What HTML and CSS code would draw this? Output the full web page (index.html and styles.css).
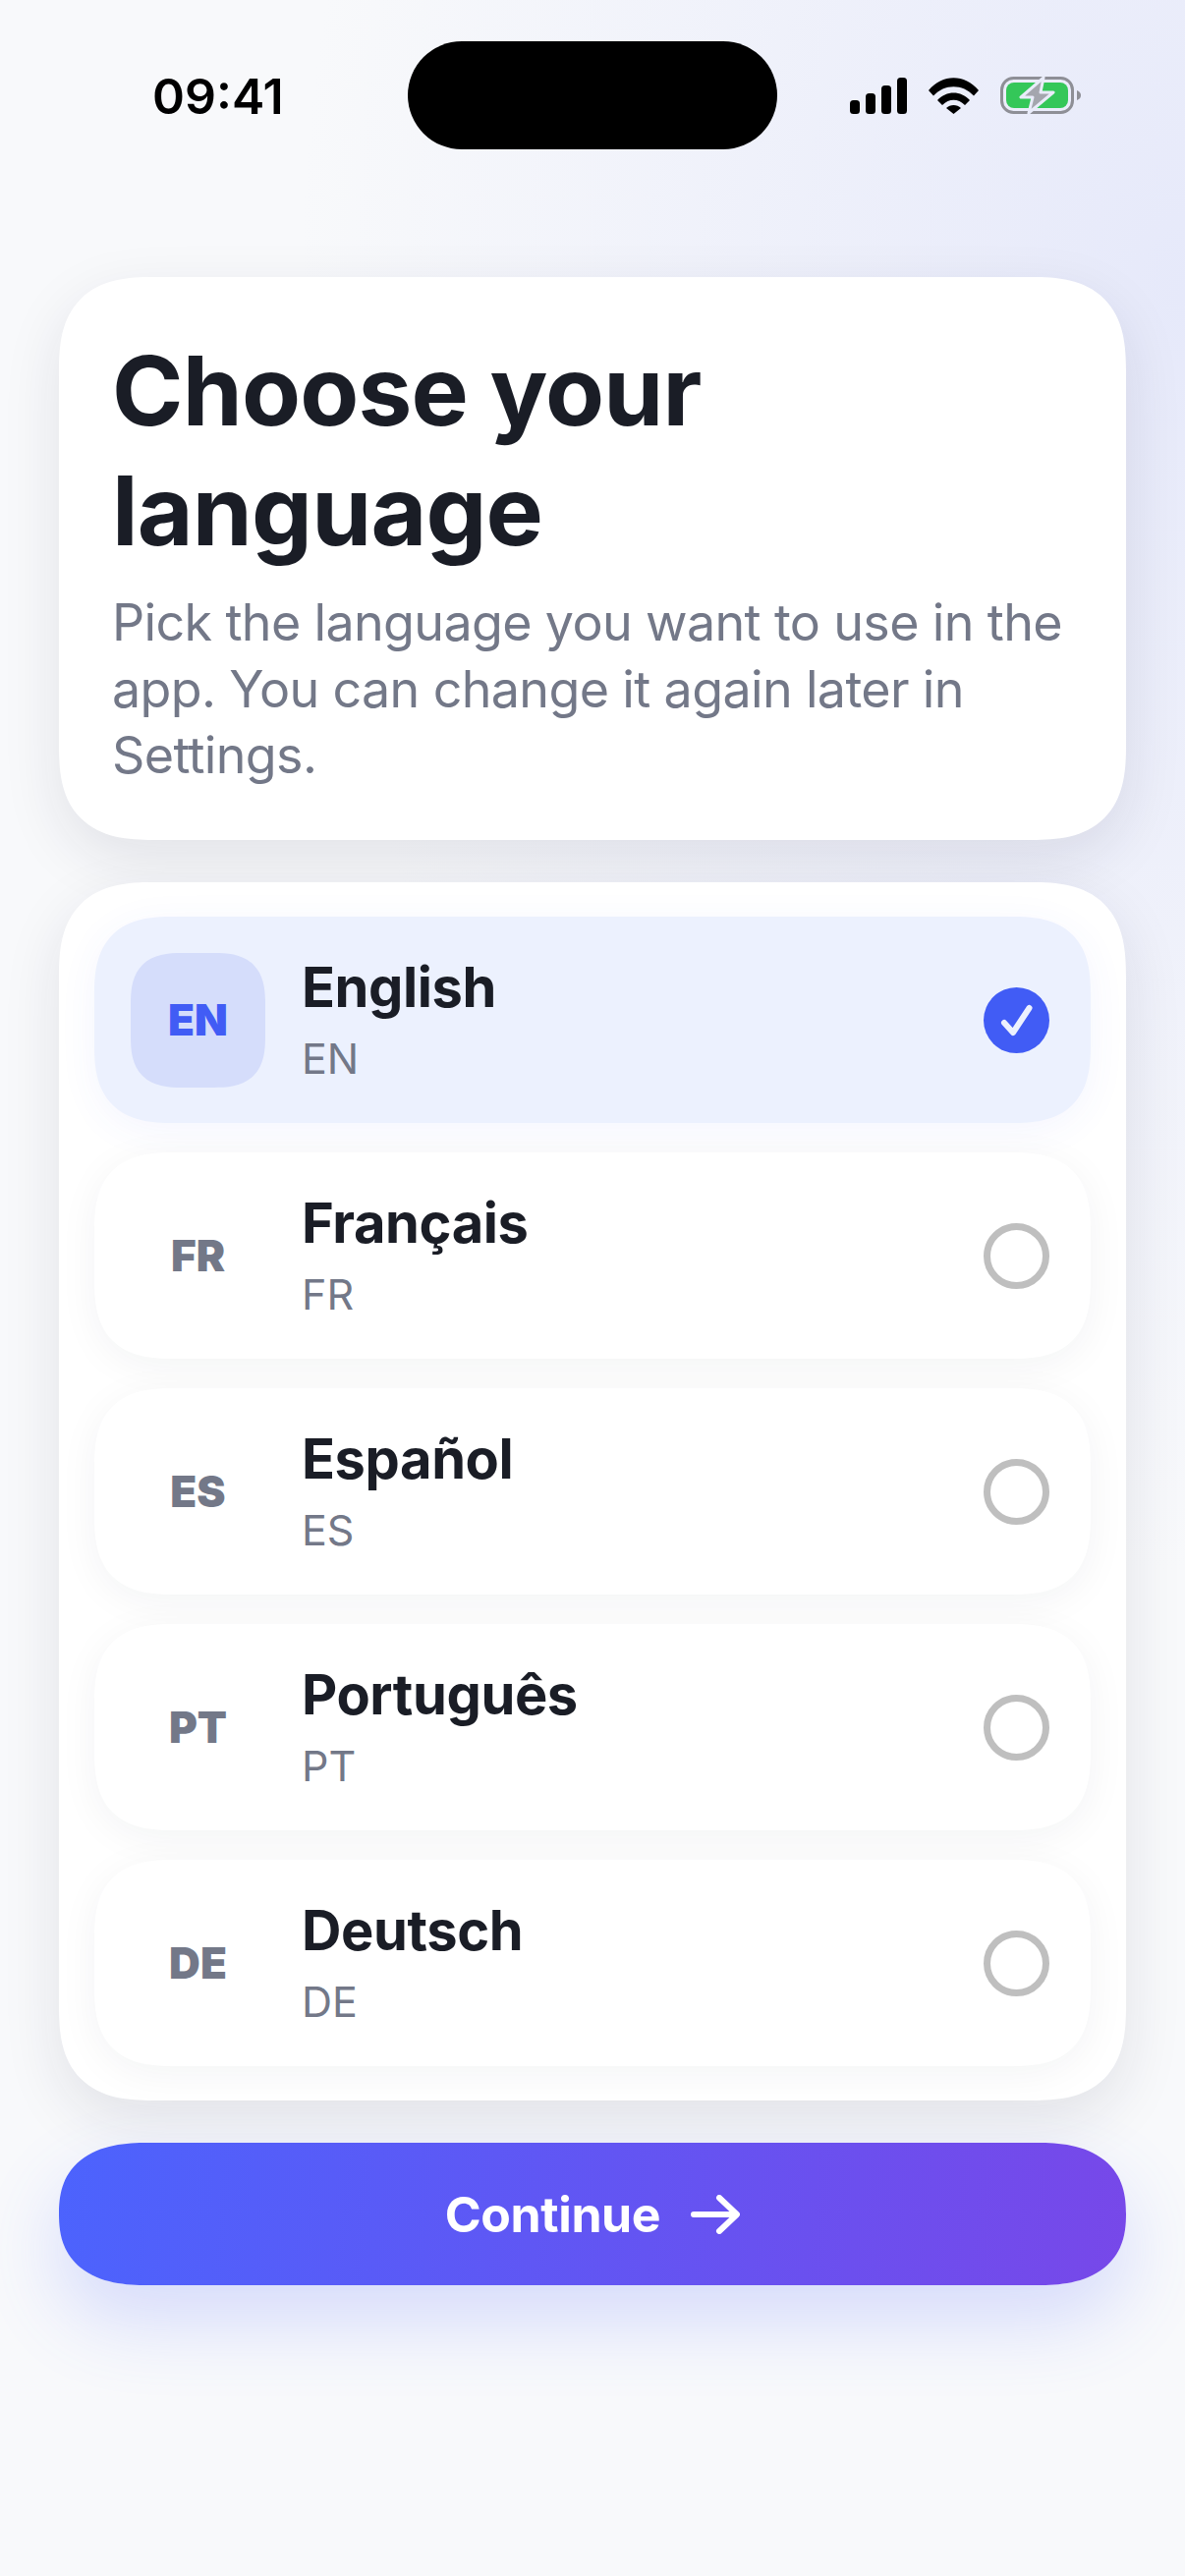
FILE: index.html
```html
<!DOCTYPE html>
<html lang="en">
<head>
    <meta charset="UTF-8">
    <meta name="viewport" content="width=device-width, initial-scale=1.0">
    <title>Choose your language</title>
    <link rel="stylesheet" href="styles.css">
</head>
<body>

    <header class="status-bar">
        <span class="status-time">09:41</span>
        <div class="island"></div>
        <div class="status-icons">
            <svg class="icon-signal" width="58" height="37" viewBox="0 0 58 37">
                <rect x="0" y="23" width="10" height="14" rx="3.5"/>
                <rect x="16" y="16" width="10" height="21" rx="3.5"/>
                <rect x="32" y="8" width="10" height="29" rx="3.5"/>
                <rect x="48" y="0" width="10" height="37" rx="3.5"/>
            </svg>
            <svg class="icon-wifi" width="51" height="37" viewBox="0 0 51 37">
                <path d="M0 13 C14 -4 37 -4 51 13 L46 18.500 C35 6 16 6 5 18.500 Z"/>
                <path d="M9 23 C18 13 33 13 42 23 L37 28 C30 21 21 21 14 28 Z"/>
                <path d="M18 31 C22 27 29 27 33 31 L25.500 37 Z"/>
            </svg>
            <svg class="icon-battery" width="82" height="38" viewBox="0 0 82 38">
                <rect x="1.500" y="1.500" width="72" height="35" rx="12" fill="none" stroke="#8e8f96" stroke-width="3"/>
                <rect x="6" y="6" width="63" height="26" rx="8" fill="#34c759"/>
                <path d="M78 14 C81 15 82 17 82 19 C82 21 81 23 78 24 Z" fill="#8e8f96"/>
                <path d="M44 1 L21 21 H33 L29 37 L54 16 H41 Z" fill="#a4a6ae" stroke="#e9ecfa" stroke-width="3" stroke-linejoin="round"/>
            </svg>
        </div>
    </header>

    <main class="content">
        <section class="card intro">
            <h1>Choose your language</h1>
            <p>Pick the language you want to use in the app. You can change it again later in Settings.</p>
        </section>

        <section class="card language-list">
            <div class="language-row selected">
                <div class="code-badge">EN</div>
                <div class="language-text">
                    <div class="language-name">English</div>
                    <div class="language-code">EN</div>
                </div>
                <div class="radio">
                    <svg width="67" height="67" viewBox="0 0 67 67">
                        <path d="M21 36 L30 46 L46.500 21" fill="none" stroke="#ecf1fe" stroke-width="6" stroke-linecap="round" stroke-linejoin="round"/>
                    </svg>
                </div>
            </div>
            <div class="language-row">
                <div class="code-badge">FR</div>
                <div class="language-text">
                    <div class="language-name">Français</div>
                    <div class="language-code">FR</div>
                </div>
                <div class="radio"></div>
            </div>
            <div class="language-row">
                <div class="code-badge">ES</div>
                <div class="language-text">
                    <div class="language-name">Español</div>
                    <div class="language-code">ES</div>
                </div>
                <div class="radio"></div>
            </div>
            <div class="language-row">
                <div class="code-badge">PT</div>
                <div class="language-text">
                    <div class="language-name">Português</div>
                    <div class="language-code">PT</div>
                </div>
                <div class="radio"></div>
            </div>
            <div class="language-row">
                <div class="code-badge">DE</div>
                <div class="language-text">
                    <div class="language-name">Deutsch</div>
                    <div class="language-code">DE</div>
                </div>
                <div class="radio"></div>
            </div>
        </section>

        <button class="continue-btn">
            Continue
            <svg width="50" height="40" viewBox="0 0 50 40">
                <path d="M3 20 H46 M29 3 L47 20 L29 37" fill="none" stroke="#fff" stroke-width="6" stroke-linecap="round" stroke-linejoin="round"/>
            </svg>
        </button>
    </main>

</body>
</html>
```

FILE: styles.css
```css
* {
    box-sizing: border-box;
}

html, body {
    margin: 0;
    padding: 0;
}

body {
    width: 1206px;
    height: 2622px;
    overflow: hidden;
    font-family: Inter, "Noto Sans", sans-serif;
    color: #1a1d26;
    background:
        radial-gradient(ellipse 900px 1300px at 1206px 300px, #e6e9fa 0%, rgba(230, 233, 250, 0) 100%),
        #f8f9fb;
}

/* Status bar */
.status-bar {
    height: 194px;
    padding-top: 42px;
    position: relative;
    display: flex;
    justify-content: center;
}

.status-time {
    position: absolute;
    left: 155px;
    top: 68px;
    font-size: 50px;
    line-height: 60px;
    font-weight: 600;
    color: #000;
}

.island {
    width: 376px;
    height: 110px;
    border-radius: 55px;
    background-color: #000;
}

.status-icons {
    position: absolute;
    left: 865px;
    top: 78px;
    display: flex;
    align-items: center;
    gap: 22px;
}

.status-icons svg {
    display: block;
}

/* Page content */
.content {
    padding: 88px 60px 0;
    display: flex;
    flex-direction: column;
}

.card {
    background-color: #fff;
    border-radius: 96px;
    corner-shape: superellipse(1.4);
    box-shadow: 0 20px 60px rgba(25, 30, 55, 0.1);
}

.intro {
    height: 573px;
    padding: 55px 54px 0;
}

.intro h1 {
    margin: 0;
    font-size: 98px;
    line-height: 122px;
    font-weight: 700;
    letter-spacing: -0.8px;
}

.intro p {
    margin: 19px 0 0;
    font-size: 52px;
    line-height: 67.5px;
    letter-spacing: -0.65px;
    color: #737888;
}

.language-list {
    margin-top: 43px;
    height: 1240px;
    padding: 35px 36px;
    display: flex;
    flex-direction: column;
    gap: 30px;
}

.language-row {
    height: 210px;
    padding: 0 42px 0 37px;
    display: flex;
    align-items: center;
    background-color: #fff;
    border-radius: 80px;
    corner-shape: superellipse(1.4);
    box-shadow: 0 8px 40px rgba(25, 30, 55, 0.05);
}

.language-row.selected {
    background-color: #ecf1fe;
    box-shadow: 0 8px 40px rgba(65, 90, 245, 0.06);
}

.code-badge {
    width: 137px;
    height: 137px;
    display: flex;
    align-items: center;
    justify-content: center;
    font-size: 44px;
    font-weight: 900;
    color: #737888;
    border-radius: 52px;
    corner-shape: superellipse(1.4);
}

.selected .code-badge {
    color: #415cf5;
    background-color: #d5ddfb;
}

.language-text {
    flex: 1;
    margin-left: 37px;
}

.language-name {
    margin-top: -2px;
    font-size: 56px;
    line-height: 70px;
    font-weight: 650;
    letter-spacing: -0.4px;
}

.language-code {
    margin-top: 10px;
    font-size: 43px;
    line-height: 54px;
    color: #737888;
}

.radio {
    width: 67px;
    height: 67px;
    border: 7px solid #bfbfbf;
    border-radius: 50%;
}

.selected .radio {
    border: none;
    background-color: #415cf5;
}

.radio svg {
    display: block;
}

.continue-btn {
    margin-top: 43px;
    height: 145px;
    display: flex;
    align-items: center;
    justify-content: center;
    gap: 31px;
    border: none;
    border-radius: 90px / 72.5px;
    corner-shape: superellipse(1.3);
    font-family: inherit;
    font-size: 50px;
    font-weight: 650;
    letter-spacing: -0.4px;
    color: #fff;
    background: linear-gradient(95deg, #4c63fd 0%, #7748e9 100%);
    box-shadow: 0 36px 80px rgba(76, 99, 253, 0.2);
}
```
